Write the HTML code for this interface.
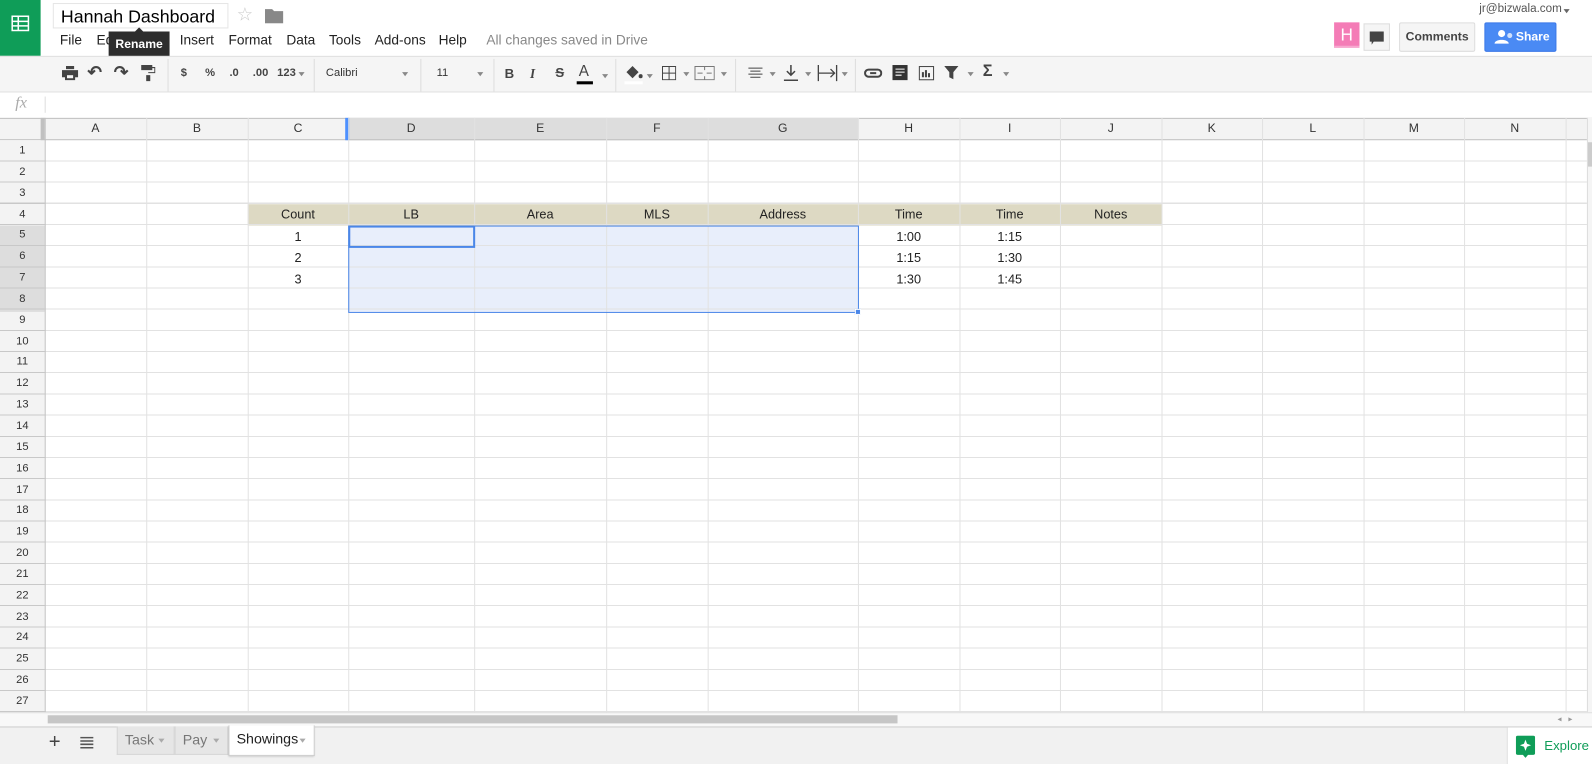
<!DOCTYPE html>
<html><head><meta charset="utf-8"><style>
*{margin:0;padding:0;box-sizing:border-box}
body{width:1592px;height:764px;overflow:hidden;background:#fff;font-family:"Liberation Sans",Arial,sans-serif}
#w{position:absolute;left:0;top:0;width:1568px;height:752px;transform:scale(1.0153,1.016);transform-origin:0 0;overflow:hidden}
.a{position:absolute;white-space:nowrap}
.t{position:absolute;font-size:12.5px;color:#222;text-align:center;white-space:nowrap}
.ic{position:absolute;color:#444;font-size:13px;font-weight:bold;white-space:nowrap}
.dd{position:absolute;width:0;height:0;border-left:3px solid transparent;border-right:3px solid transparent;border-top:4px solid #888}
.m{position:absolute;top:32px;font-size:13.5px;color:#222;white-space:nowrap}
</style></head><body><div id="w">
<div class="a" style="left:0;top:0;width:40px;height:55px;background:#0f9d58"></div>
<svg class="a" style="left:11px;top:14px" width="18" height="18" viewBox="0 0 18 18"><rect x="1" y="2" width="16" height="14" fill="none" stroke="#fff" stroke-width="1.5"/><path d="M1 7H17M1 11.5H17M7 2V16" stroke="#fff" stroke-width="1.5"/></svg>
<div class="a" style="left:52px;top:3px;width:173px;height:25px;border:1px solid #e5e5e5;font-size:17.5px;color:#000;padding:2px 0 0 7px;overflow:hidden">Hannah Dashboard</div>
<div class="a" style="left:233px;top:4px;font-size:18px;color:#ccc">☆</div>
<svg class="a" style="left:261px;top:8px" width="18" height="15"><path d="M0 1H7L9 3H18V15H0Z" fill="#888"/></svg>
<div class="m" style="left:59px">File</div>
<div class="m" style="left:95px">Ed</div>
<div class="a" style="left:107px;top:31px;width:60px;height:25px;background:#2d2d2d;color:#fff;font-size:12px;font-weight:bold;text-align:center;line-height:25px">Rename</div>
<div class="a" style="left:132px;top:27px;width:0;height:0;border-left:5px solid transparent;border-right:5px solid transparent;border-bottom:5px solid #2d2d2d"></div>
<div class="m" style="left:177px">Insert</div>
<div class="m" style="left:225px">Format</div>
<div class="m" style="left:282px">Data</div>
<div class="m" style="left:324px">Tools</div>
<div class="m" style="left:369px">Add-ons</div>
<div class="m" style="left:432px">Help</div>
<div class="m" style="left:479px;color:#888">All changes saved in Drive</div>
<div class="a" style="left:1457px;top:3px;font-size:11.5px;color:#555">jr@bizwala.com</div>
<div class="dd" style="left:1540px;top:9px;border-top-color:#666"></div>
<div class="a" style="left:1314px;top:22px;width:25px;height:25px;background:#f47cb6;color:#fff;font-size:17px;text-align:center;line-height:25px;border-bottom:2px solid #f7a8cf">H</div>
<div class="a" style="left:1343px;top:23px;width:26px;height:27px;border:1px solid #ddd;background:#f5f5f5"></div>
<svg class="a" style="left:1349px;top:31px" width="14" height="13"><path d="M0 0H14V10H4L2 13V10H0Z" fill="#444"/></svg>
<div class="a" style="left:1378px;top:22px;width:75px;height:29px;border:1px solid #ddd;border-radius:2px;background:#f5f5f5;font-size:12px;font-weight:bold;color:#444;text-align:center;line-height:27px">Comments</div>
<div class="a" style="left:1462px;top:22px;width:71px;height:29px;border-radius:2px;background:#4a8af4;border:1px solid #3b78e7;font-size:12px;font-weight:bold;color:#fff;line-height:27px;padding-left:30px">Share</div>
<svg class="a" style="left:1472px;top:29px" width="20" height="14"><circle cx="7" cy="4" r="3.5" fill="#fff"/><path d="M0 14C0 9 14 9 14 14Z" fill="#fff"/><circle cx="15" cy="6" r="2.5" fill="#cfe0fc"/></svg>
<div class="a" style="left:0;top:55px;width:1568px;height:36px;background:#f5f5f5;border-top:1px solid #e0e0e0;border-bottom:1px solid #e0e0e0"></div>
<svg class="a" style="left:61px;top:65px" width="16" height="14"><path d="M4 0H12V3H4ZM0 4H16V11H13V14H3V11H0Z" fill="#444"/><rect x="5" y="9" width="6" height="3" fill="#f5f5f5"/></svg>
<div class="ic" style="left:86px;top:62px;font-size:17px">↶</div>
<div class="ic" style="left:112px;top:62px;font-size:17px">↷</div>
<svg class="a" style="left:139px;top:64px" width="14" height="16"><path d="M0 0H11V5H0ZM11 2H14V8H7V10H9V16H5V10H7V7H13V3H11Z" fill="#444"/></svg>
<div class="a" style="left:165px;top:58px;width:1px;height:32px;background:#ddd"></div>
<div class="ic" style="left:178px;top:66px;font-size:11px">$</div>
<div class="ic" style="left:202px;top:66px;font-size:11px">%</div>
<div class="ic" style="left:226px;top:66px;font-size:11px">.0</div>
<div class="ic" style="left:249px;top:66px;font-size:11px">.00</div>
<div class="ic" style="left:273px;top:66px;font-size:11px">123</div><div class="dd" style="left:294px;top:71px"></div>
<div class="a" style="left:309px;top:58px;width:1px;height:32px;background:#ddd"></div>
<div class="a" style="left:321px;top:66px;font-size:11px;color:#333">Calibri</div><div class="dd" style="left:396px;top:71px"></div>
<div class="a" style="left:414px;top:58px;width:1px;height:32px;background:#ddd"></div>
<div class="a" style="left:430px;top:66px;font-size:11px;color:#333">11</div><div class="dd" style="left:470px;top:71px"></div>
<div class="a" style="left:486px;top:58px;width:1px;height:32px;background:#ddd"></div>
<div class="ic" style="left:497px;top:65px;font-size:13px">B</div>
<div class="ic" style="left:522px;top:65px;font-size:13px;font-style:italic;font-family:'Liberation Serif',serif">I</div>
<div class="ic" style="left:547px;top:64px;font-size:13px;text-decoration:line-through">S</div>
<div class="ic" style="left:570px;top:62px;font-size:15px;font-weight:normal">A</div>
<div class="a" style="left:568px;top:80px;width:16px;height:3px;background:#000"></div><div class="dd" style="left:593px;top:73px"></div>
<div class="a" style="left:606px;top:58px;width:1px;height:32px;background:#ddd"></div>
<svg class="a" style="left:615px;top:64px" width="18" height="14"><path d="M2 7L8 1L14 7L8 13Z" fill="#444"/><circle cx="16" cy="11" r="2" fill="#444"/></svg>
<div class="a" style="left:615px;top:80px;width:18px;height:3px;background:#fff"></div><div class="dd" style="left:637px;top:73px"></div>
<svg class="a" style="left:652px;top:65px" width="14" height="14"><path d="M.5 .5H13.5V13.5H.5ZM7 0V14M0 7H14" stroke="#444" fill="none"/></svg><div class="dd" style="left:673px;top:71px"></div>
<svg class="a" style="left:684px;top:65px" width="20" height="14"><path d="M.5 .5H19.5V13.5H.5ZM10 0V4M10 10V14M3 7H8M12 7H17" stroke="#777" fill="none"/></svg><div class="dd" style="left:710px;top:71px"></div>
<div class="a" style="left:724px;top:58px;width:1px;height:32px;background:#ddd"></div>
<svg class="a" style="left:737px;top:66px" width="14" height="12"><path d="M0 1H14M2 4H12M0 7H14M2 10H12" stroke="#444"/></svg><div class="dd" style="left:758px;top:71px"></div>
<svg class="a" style="left:772px;top:64px" width="14" height="16"><path d="M7 0V10M3 6L7 10L11 6M0 15H14" stroke="#444" stroke-width="1.5" fill="none"/></svg><div class="dd" style="left:793px;top:71px"></div>
<svg class="a" style="left:805px;top:64px" width="20" height="16"><path d="M1 0V16M19 0V16M1 8H17M13 4L17 8L13 12" stroke="#444" stroke-width="1.3" fill="none"/></svg><div class="dd" style="left:829px;top:71px"></div>
<div class="a" style="left:842px;top:58px;width:1px;height:32px;background:#ddd"></div>
<svg class="a" style="left:851px;top:67px" width="18" height="10"><rect x="1" y="1.5" width="16" height="7" rx="3.5" fill="none" stroke="#444" stroke-width="2"/><path d="M6 5H12" stroke="#444" stroke-width="2"/></svg>
<svg class="a" style="left:879px;top:64px" width="15" height="15"><rect width="15" height="15" fill="#333"/><path d="M3 4H12M3 7H12M3 10H9" stroke="#fff"/></svg>
<svg class="a" style="left:904px;top:64px" width="17" height="16"><rect x="1.5" y="1.5" width="14" height="13" fill="none" stroke="#444"/><path d="M5 12V7M8 12V5M11 12V8" stroke="#444" stroke-width="2"/></svg>
<svg class="a" style="left:930px;top:65px" width="14" height="14"><path d="M0 0H14L9 6V13L5 11V6Z" fill="#444"/></svg><div class="dd" style="left:953px;top:71px"></div>
<div class="ic" style="left:968px;top:62px;font-size:16px">Σ</div><div class="dd" style="left:988px;top:71px"></div>
<div class="a" style="left:15px;top:93px;font-size:16px;font-style:italic;color:#aaa;font-family:'Liberation Serif',serif">fx</div>
<div class="a" style="left:44px;top:95px;width:1px;height:16px;background:#ddd"></div>
<div class="a" style="left:0;top:116px;width:1568px;height:22px;background:#f3f3f3;border-top:1px solid #c0c0c0;border-bottom:1px solid #c0c0c0"></div>
<div class="a" style="left:343px;top:116px;width:502px;height:22px;background:#ddd;border-bottom:1px solid #c0c0c0"></div>
<div class="a" style="left:340px;top:116px;width:4px;height:22px;background:#4d90fe"></div>
<div class="a" style="left:0;top:138px;width:44px;height:563px;background:#f3f3f3"></div>
<div class="a" style="left:0;top:222px;width:44px;height:85px;background:#ddd"></div>
<div class="a" style="left:40px;top:116px;width:4px;height:22px;background:#c0c0c0"></div>
<div class="a" style="left:244px;top:201px;width:900px;height:21px;background:#ddd9c3"></div>
<div class="a" style="left:343px;top:222px;width:502px;height:85px;background:#e8eefb"></div>
<div class="a" style="left:0;top:138px;width:1563px;height:563px;background:repeating-linear-gradient(to bottom,transparent 0,transparent 19.85px,#e2e2e2 19.85px,#e2e2e2 20.85px)"></div>
<div class="a" style="left:0;top:138px;width:44px;height:563px;background:repeating-linear-gradient(to bottom,transparent 0,transparent 19.85px,#c8c8c8 19.85px,#c8c8c8 20.85px)"></div>
<div class="a" style="left:44px;top:116px;width:1px;height:585px;background:#c0c0c0"></div>
<div class="a" style="left:144px;top:116px;width:1px;height:585px;background:#e2e2e2"></div>
<div class="a" style="left:244px;top:116px;width:1px;height:585px;background:#e2e2e2"></div>
<div class="a" style="left:343px;top:116px;width:1px;height:585px;background:#e2e2e2"></div>
<div class="a" style="left:467px;top:116px;width:1px;height:585px;background:#e2e2e2"></div>
<div class="a" style="left:597px;top:116px;width:1px;height:585px;background:#e2e2e2"></div>
<div class="a" style="left:697px;top:116px;width:1px;height:585px;background:#e2e2e2"></div>
<div class="a" style="left:845px;top:116px;width:1px;height:585px;background:#e2e2e2"></div>
<div class="a" style="left:945px;top:116px;width:1px;height:585px;background:#e2e2e2"></div>
<div class="a" style="left:1044px;top:116px;width:1px;height:585px;background:#e2e2e2"></div>
<div class="a" style="left:1144px;top:116px;width:1px;height:585px;background:#e2e2e2"></div>
<div class="a" style="left:1243px;top:116px;width:1px;height:585px;background:#e2e2e2"></div>
<div class="a" style="left:1343px;top:116px;width:1px;height:585px;background:#e2e2e2"></div>
<div class="a" style="left:1442px;top:116px;width:1px;height:585px;background:#e2e2e2"></div>
<div class="a" style="left:1542px;top:116px;width:1px;height:585px;background:#e2e2e2"></div>
<div class="a" style="left:1563px;top:116px;width:5px;height:585px;background:#f5f5f5;border-left:1px solid #ddd"></div>
<div class="a" style="left:1564px;top:140px;width:4px;height:24px;background:#ccc"></div>
<div class="a" style="left:343px;top:222px;width:503px;height:86px;border:1px solid #4a86e8"></div>
<div class="a" style="left:343px;top:222px;width:125px;height:22px;border:2px solid #4a86e8"></div>
<div class="a" style="left:842px;top:304px;width:6px;height:6px;background:#4a86e8;border:1px solid #fff"></div>
<div class="t" style="left:44px;top:119px;width:100px;font-size:12px;color:#333">A</div>
<div class="t" style="left:144px;top:119px;width:100px;font-size:12px;color:#333">B</div>
<div class="t" style="left:244px;top:119px;width:99px;font-size:12px;color:#333">C</div>
<div class="t" style="left:343px;top:119px;width:124px;font-size:12px;color:#333">D</div>
<div class="t" style="left:467px;top:119px;width:130px;font-size:12px;color:#333">E</div>
<div class="t" style="left:597px;top:119px;width:100px;font-size:12px;color:#333">F</div>
<div class="t" style="left:697px;top:119px;width:148px;font-size:12px;color:#333">G</div>
<div class="t" style="left:845px;top:119px;width:100px;font-size:12px;color:#333">H</div>
<div class="t" style="left:945px;top:119px;width:99px;font-size:12px;color:#333">I</div>
<div class="t" style="left:1044px;top:119px;width:100px;font-size:12px;color:#333">J</div>
<div class="t" style="left:1144px;top:119px;width:99px;font-size:12px;color:#333">K</div>
<div class="t" style="left:1243px;top:119px;width:100px;font-size:12px;color:#333">L</div>
<div class="t" style="left:1343px;top:119px;width:99px;font-size:12px;color:#333">M</div>
<div class="t" style="left:1442px;top:119px;width:100px;font-size:12px;color:#333">N</div>
<div class="a" style="left:0;top:138px;width:44px;font-size:11px;color:#333;text-align:center;line-height:20.85px">1<br>2<br>3<br>4<br>5<br>6<br>7<br>8<br>9<br>10<br>11<br>12<br>13<br>14<br>15<br>16<br>17<br>18<br>19<br>20<br>21<br>22<br>23<br>24<br>25<br>26<br>27</div>
<div class="t" style="left:244px;top:204px;width:99px">Count</div>
<div class="t" style="left:343px;top:204px;width:124px">LB</div>
<div class="t" style="left:467px;top:204px;width:130px">Area</div>
<div class="t" style="left:597px;top:204px;width:100px">MLS</div>
<div class="t" style="left:697px;top:204px;width:148px">Address</div>
<div class="t" style="left:845px;top:204px;width:100px">Time</div>
<div class="t" style="left:945px;top:204px;width:99px">Time</div>
<div class="t" style="left:1044px;top:204px;width:100px">Notes</div>
<div class="t" style="left:244px;top:226px;width:99px">1</div>
<div class="t" style="left:244px;top:247px;width:99px">2</div>
<div class="t" style="left:244px;top:268px;width:99px">3</div>
<div class="t" style="left:845px;top:226px;width:100px">1:00</div>
<div class="t" style="left:845px;top:247px;width:100px">1:15</div>
<div class="t" style="left:845px;top:268px;width:100px">1:30</div>
<div class="t" style="left:945px;top:226px;width:99px">1:15</div>
<div class="t" style="left:945px;top:247px;width:99px">1:30</div>
<div class="t" style="left:945px;top:268px;width:99px">1:45</div>
<div class="a" style="left:0;top:701px;width:1568px;height:14px;background:#f8f8f8;border-top:1px solid #ddd"></div>
<div class="a" style="left:47px;top:704px;width:837px;height:8px;background:#c6c6c6"></div>
<div class="a" style="left:1534px;top:703px;font-size:8px;color:#999">◂ &nbsp; ▸</div>
<div class="a" style="left:0;top:715px;width:1568px;height:37px;background:#f1f1f1;border-top:1px solid #ccc"></div>
<div class="a" style="left:48px;top:719px;font-size:20px;color:#444">+</div>
<svg class="a" style="left:79px;top:725px" width="13" height="12"><path d="M0 1H13M0 4.3H13M0 7.6H13M0 11H13" stroke="#555" stroke-width="1.5"/></svg>
<div class="a" style="left:115px;top:715px;width:57px;height:28px;background:#e6e6e6;border:1px solid #d6d6d6;border-top:none;font-size:14px;color:#777;padding:5px 0 0 7px">Task</div><div class="dd" style="left:156px;top:727px;border-top-color:#aaa"></div>
<div class="a" style="left:172px;top:715px;width:53px;height:28px;background:#e6e6e6;border:1px solid #d6d6d6;border-top:none;font-size:14px;color:#777;padding:5px 0 0 7px">Pay</div><div class="dd" style="left:210px;top:727px;border-top-color:#aaa"></div>
<div class="a" style="left:225px;top:714px;width:85px;height:30px;background:#fff;border:1px solid #ccc;border-top:none;box-shadow:0 1px 2px rgba(0,0,0,.2);font-size:14px;color:#222;padding:5px 0 0 7px">Showings</div><div class="dd" style="left:295px;top:727px;border-top-color:#aaa"></div>
<div class="a" style="left:1484px;top:716px;width:84px;height:36px;background:#fff;border-left:1px solid #ddd"></div>
<svg class="a" style="left:1493px;top:724px" width="19" height="22"><path d="M2 0H17Q19 0 19 2V17Q19 19 17 19H12L9.5 22L7 19H2Q0 19 0 17V2Q0 0 2 0Z" fill="#0f9d58"/><path d="M9.5 4L11 8L15 9.5L11 11L9.5 15L8 11L4 9.5L8 8Z" fill="#fff"/></svg>
<div class="a" style="left:1521px;top:726px;font-size:13px;color:#0f9d58">Explore</div>
</div></body></html>
